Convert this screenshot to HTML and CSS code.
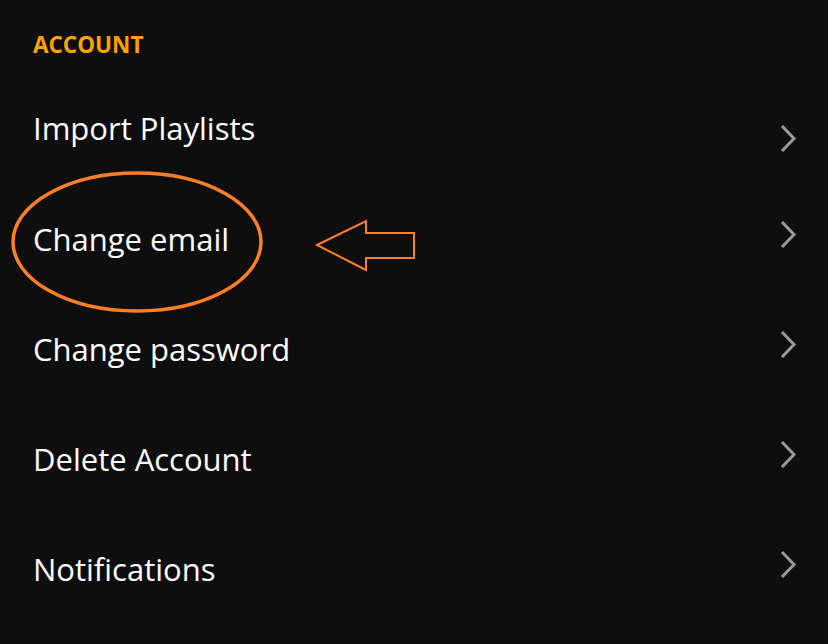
FILE: index.html
```html
<!DOCTYPE html>
<html lang="en">
<head>
  <meta charset="UTF-8">
  <meta name="viewport" content="width=device-width, initial-scale=1.0">
  <title>Account settings</title>
  <link rel="stylesheet" href="styles.css">
</head>
<body>
  <div class="settings">
    <h2 class="section-title">ACCOUNT</h2>
    <ul class="menu">
      <li class="menu-item first">
        <span>Import Playlists</span>
        <svg class="chev" width="18" height="30" viewBox="0 0 18 30"><path d="M3 2 L15 14.5 L3 27" fill="none" stroke="#9a9a9a" stroke-width="3"/></svg>
      </li>
      <li class="menu-item">
        <span>Change email</span>
        <svg class="chev" width="18" height="30" viewBox="0 0 18 30"><path d="M3 2 L15 14.5 L3 27" fill="none" stroke="#9a9a9a" stroke-width="3"/></svg>
      </li>
      <li class="menu-item">
        <span>Change password</span>
        <svg class="chev" width="18" height="30" viewBox="0 0 18 30"><path d="M3 2 L15 14.5 L3 27" fill="none" stroke="#9a9a9a" stroke-width="3"/></svg>
      </li>
      <li class="menu-item">
        <span>Delete Account</span>
        <svg class="chev" width="18" height="30" viewBox="0 0 18 30"><path d="M3 2 L15 14.5 L3 27" fill="none" stroke="#9a9a9a" stroke-width="3"/></svg>
      </li>
      <li class="menu-item">
        <span>Notifications</span>
        <svg class="chev" width="18" height="30" viewBox="0 0 18 30"><path d="M3 2 L15 14.5 L3 27" fill="none" stroke="#9a9a9a" stroke-width="3"/></svg>
      </li>
    </ul>
  </div>

  <svg class="markup" width="828" height="644" viewBox="0 0 828 644">
    <ellipse cx="137" cy="242" rx="124" ry="69" fill="none" stroke="#ff7f27" stroke-width="3.5"/>
    <polygon points="317,245 366,221 366,233 414,233 414,258 366,258 366,270" fill="none" stroke="#ff7f27" stroke-width="2"/>
  </svg>
</body>
</html>
```

FILE: styles.css
```css
html, body {
  margin: 0;
  padding: 0;
  background: #0e0e0e;
}
body {
  font-family: "Open Sans", "Noto Sans", sans-serif;
  color: #fff;
}
.settings {
  position: relative;
  padding: 28px 31px 0 33px;
}
.section-title {
  margin: 0;
  font-size: 22.5px;
  font-weight: 700;
  line-height: 34px;
  color: #ffa200;
}
.menu {
  margin: 0;
  padding: 0;
  list-style: none;
}
.menu-item {
  display: flex;
  align-items: center;
  justify-content: space-between;
  height: 110px;
  font-size: 31px;
  font-weight: 500;
  line-height: 40px;
}
.menu-item.first {
  height: 112px;
  margin-top: 10px;
}
.chev {
  display: block;
  margin-top: -9px;
}
.menu-item.first .chev {
  margin-top: 21px;
}
.markup {
  position: absolute;
  left: 0;
  top: 0;
  pointer-events: none;
}
```
